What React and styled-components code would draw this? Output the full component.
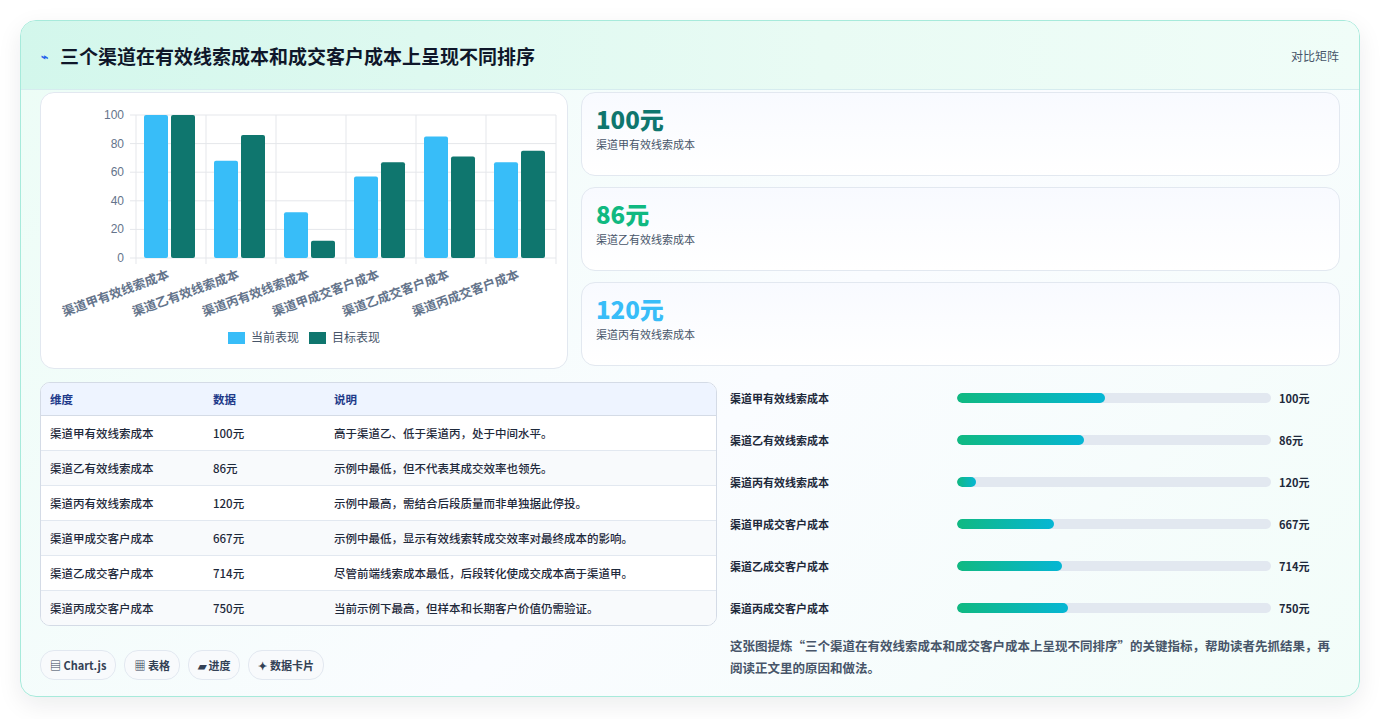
import React from "react";
import styled, { createGlobalStyle } from "styled-components";

const Global = createGlobalStyle`
  body { margin: 0; background: #fff; font-family: "Noto Sans CJK SC", "Noto Sans", sans-serif; }
`;
const Page = styled.div`padding: 20px 21px 22px 20px;`;
const Card = styled.div`
  border: 1px solid #a7eadb; border-radius: 16px; overflow: hidden;
  background: linear-gradient(135deg, #ecfdf6 0%, #fafcff 55%, #f2fdf9 100%);
  box-shadow: 0 8px 24px rgba(15,23,42,0.08);
`;
const Header = styled.div`
  height: 68px; display: flex; align-items: center; justify-content: space-between;
  padding: 0 20px; border-bottom: 1px solid #d6ecef;
  background: linear-gradient(90deg, #d3f7ec, #e9fbf4 60%, #f0fdf8);
`;
const Title = styled.h1`
  margin: 0; font-size: 19px; font-weight: 700; color: #0f172a; display: flex; align-items: center; gap: 12px;
`;
const Tag = styled.span`font-size: 12px; color: #475569;`;
const Body = styled.div`padding: 2px 19px 16px 19px; display: flex; flex-direction: column; gap: 13px;`;
const TopGrid = styled.div`display: grid; grid-template-columns: 528px 1fr; gap: 13px;`;
const Panel = styled.div`
  background: #fff; border: 1px solid #e2e8f0; border-radius: 14px;
`;
const ChartPanel = styled(Panel)`height: 275px; overflow: hidden;`;
const Metrics = styled.div`display: flex; flex-direction: column; gap: 11px;`;
const Metric = styled(Panel)`
  height: 84px; box-sizing: border-box; padding: 10px 14px; background: linear-gradient(180deg,#f8faff,#fff);
`;
const MetricValue = styled.div`font-size: 24px; font-weight: 800; color: ${p => p.$c}; line-height: 32px;`;
const MetricLabel = styled.div`font-size: 11px; color: #475569; margin-top: 1px;`;
const BottomGrid = styled.div`display: grid; grid-template-columns: 677px 1fr; gap: 13px;`;
const LeftCol = styled.div`display: flex; flex-direction: column; gap: 24px;`;
const Table = styled.table`
  width: 100%; border-collapse: separate; border-spacing: 0; border: 1px solid #d4dbe6; border-radius: 10px;
  overflow: hidden; font-size: 11.5px; font-weight: 500; color: #1e293b; background: #fff;
`;
const Th = styled.th`
  text-align: left; font-weight: 700; color: #1e3a8a; background: #eef4ff; height: 32px; padding: 0 9px;
  border-bottom: 1px solid #d4dbe6;
`;
const Td = styled.td`
  height: 34px; padding: 0 9px; border-bottom: ${p => (p.$last ? "none" : "1px solid #e2e8f0")};
  background: ${p => (p.$odd ? "#f8fafc" : "#fff")};
`;
const Chips = styled.div`display: flex; gap: 8px;`;
const Chip = styled.span`
  font-size: 11px; font-weight: 600; color: #334155; border: 1px solid #e2e8f0; border-radius: 14px;
  padding: 6px 9px; background: #f8fafc;
`;
const Right = styled.div`display: flex; flex-direction: column;`;
const BarRow = styled.div`
  height: 42px; display: grid; grid-template-columns: 219px 314px 1fr; gap: 8px; align-items: center;
  font-size: 11px; font-weight: 600; color: #1e293b; margin-top: ${p => (p.$first ? "-5px" : "0")};
`;
const Track = styled.div`height: 10px; border-radius: 5px; background: #e2e8f0; overflow: hidden;`;
const Fill = styled.div`height: 100%; border-radius: 5px; background: linear-gradient(90deg,#10b981,#06b6d4);`;
const Caption = styled.p`margin: 6px 0 0; font-size: 12.5px; line-height: 22px; color: #475569; font-weight: 600;`;

const labels = ["渠道甲有效线索成本","渠道乙有效线索成本","渠道丙有效线索成本","渠道甲成交客户成本","渠道乙成交客户成本","渠道丙成交客户成本"];
const cur = [100,68,32,57,85,67];
const tgt = [100,86,12,67,71,75];
const vals = ["100元","86元","120元","667元","714元","750元"];
const notes = ["高于渠道乙、低于渠道丙，处于中间水平。","示例中最低，但不代表其成交效率也领先。","示例中最高，需结合后段质量而非单独据此停投。","示例中最低，显示有效线索转成交效率对最终成本的影响。","尽管前端线索成本最低，后段转化使成交成本高于渠道甲。","当前示例下最高，但样本和长期客户价值仍需验证。"];
const pct = [47, 40.5, 6, 31, 33.5, 35.5];

function Chart() {
  const x0 = 95, y0 = 22, w = 420, h = 143;
  const cw = w / 6;
  const font = "Liberation Sans, Noto Sans CJK SC, sans-serif";
  return (
    <svg width="528" height="275">
      {[0,20,40,60,80,100].map(v => {
        const y = y0 + h - (v / 100) * h;
        return <g key={v}>
          <line x1={x0 - 6} x2={x0 + w} y1={y} y2={y} stroke="#e5e7eb" />
          <text x={x0 - 12} y={y + 4} textAnchor="end" fontSize="12" fill="#64748b" fontFamily={font}>{v}</text>
        </g>;
      })}
      {[0,1,2,3,4,5,6].map(i => <line key={i} x1={x0 + i*cw} x2={x0 + i*cw} y1={y0} y2={y0 + h + 6} stroke="#e5e7eb" />)}
      {labels.map((l, i) => {
        const cx = x0 + i * cw;
        const hc = cur[i] / 100 * h, ht = tgt[i] / 100 * h;
        return <g key={l}>
          <rect x={cx + 8} y={y0 + h - hc} width={24} height={hc} rx="2" fill="#38bdf8" />
          <rect x={cx + 35} y={y0 + h - ht} width={24} height={ht} rx="2" fill="#0f766e" />
          <text transform={`translate(${cx + 34},${y0 + h + 20}) rotate(-20)`} textAnchor="end" fontSize="12.5" fontWeight="600" fill="#64748b" fontFamily={font}>{l}</text>
        </g>;
      })}
      <rect x="187" y="239" width="17" height="12" fill="#38bdf8" />
      <text x="210" y="249" fontSize="12" fill="#475569" fontFamily={font}>当前表现</text>
      <rect x="268" y="239" width="17" height="12" fill="#0f766e" />
      <text x="291" y="249" fontSize="12" fill="#475569" fontFamily={font}>目标表现</text>
    </svg>
  );
}

export default function App() {
  return (
    <Page>
      <Global />
      <Card>
        <Header>
          <Title><span style={{ color: "#2563eb", fontSize: 12 }}>⌁</span>三个渠道在有效线索成本和成交客户成本上呈现不同排序</Title>
          <Tag>对比矩阵</Tag>
        </Header>
        <Body>
          <TopGrid>
            <ChartPanel><Chart /></ChartPanel>
            <Metrics>
              <Metric><MetricValue $c="#0f766e">100元</MetricValue><MetricLabel>渠道甲有效线索成本</MetricLabel></Metric>
              <Metric><MetricValue $c="#10b981">86元</MetricValue><MetricLabel>渠道乙有效线索成本</MetricLabel></Metric>
              <Metric><MetricValue $c="#38bdf8">120元</MetricValue><MetricLabel>渠道丙有效线索成本</MetricLabel></Metric>
            </Metrics>
          </TopGrid>
          <BottomGrid>
            <LeftCol>
              <Table>
                <thead><tr><Th style={{ width: 145 }}>维度</Th><Th style={{ width: 103 }}>数据</Th><Th>说明</Th></tr></thead>
                <tbody>
                  {labels.map((l, i) => (
                    <tr key={l}>
                      <Td $odd={i % 2 === 1} $last={i === 5}>{l}</Td>
                      <Td $odd={i % 2 === 1} $last={i === 5}>{vals[i]}</Td>
                      <Td $odd={i % 2 === 1} $last={i === 5}>{notes[i]}</Td>
                    </tr>
                  ))}
                </tbody>
              </Table>
              <Chips>
                <Chip>▤ Chart.js</Chip><Chip>▦ 表格</Chip><Chip>▰ 进度</Chip><Chip>✦ 数据卡片</Chip>
              </Chips>
            </LeftCol>
            <Right>
              {labels.map((l, i) => (
                <BarRow key={l} $first={i === 0}>
                  <span>{l}</span>
                  <Track><Fill style={{ width: pct[i] + "%" }} /></Track>
                  <span>{vals[i]}</span>
                </BarRow>
              ))}
              <Caption>这张图提炼“三个渠道在有效线索成本和成交客户成本上呈现不同排序”的关键指标，帮助读者先抓结果，再阅读正文里的原因和做法。</Caption>
            </Right>
          </BottomGrid>
        </Body>
      </Card>
    </Page>
  );
}
